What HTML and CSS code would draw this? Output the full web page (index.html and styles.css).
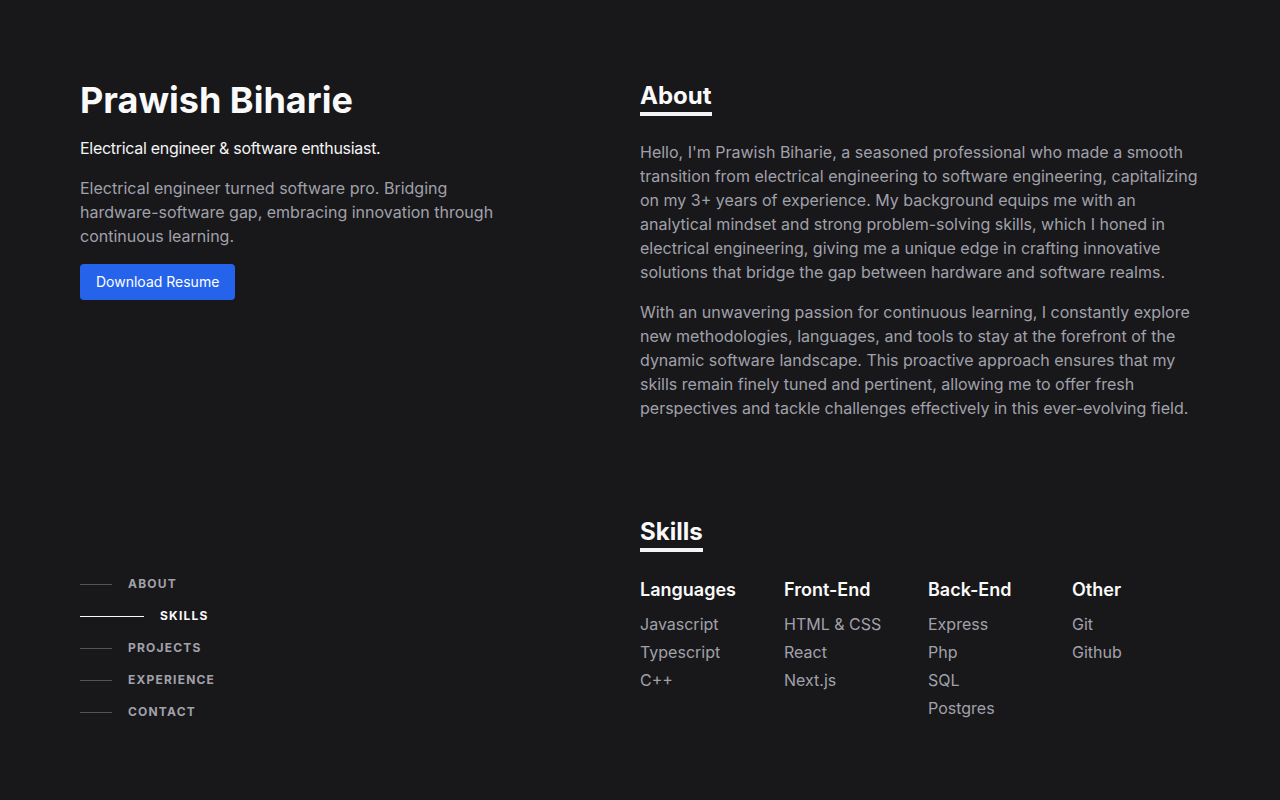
FILE: index.html
```html
<!DOCTYPE html>
<html lang="en">
<head>
<meta charset="utf-8">
<title>Prawish Biharie</title>
<link rel="stylesheet" href="styles.css">
</head>
<body>
<div class="page">
  <header class="side">
    <div class="intro">
      <h1 class="name">Prawish Biharie</h1>
      <h2 class="role">Electrical engineer &amp; software enthusiast.</h2>
      <p class="bio">Electrical engineer turned software pro. Bridging hardware-software gap, embracing innovation through continuous learning.</p>
      <a class="btn" href="#">Download Resume</a>
    </div>
    <nav class="nav">
      <a class="nav-item" href="#about"><span class="nav-line"></span><span class="nav-text">About</span></a>
      <a class="nav-item active" href="#skills"><span class="nav-line"></span><span class="nav-text">Skills</span></a>
      <a class="nav-item" href="#projects"><span class="nav-line"></span><span class="nav-text">Projects</span></a>
      <a class="nav-item" href="#experience"><span class="nav-line"></span><span class="nav-text">Experience</span></a>
      <a class="nav-item" href="#contact"><span class="nav-line"></span><span class="nav-text">Contact</span></a>
    </nav>
  </header>
  <main class="content">
    <section class="section" id="about">
      <h2 class="section-title">About</h2>
      <p class="text">Hello, I'm Prawish Biharie, a seasoned professional who made a smooth transition from electrical engineering to software engineering, capitalizing on my 3+ years of experience. My background equips me with an analytical mindset and strong problem-solving skills, which I honed in electrical engineering, giving me a unique edge in crafting innovative solutions that bridge the gap between hardware and software realms.</p>
      <p class="text">With an unwavering passion for continuous learning, I constantly explore new methodologies, languages, and tools to stay at the forefront of the dynamic software landscape. This proactive approach ensures that my skills remain finely tuned and pertinent, allowing me to offer fresh perspectives and tackle challenges effectively in this ever-evolving field.</p>
    </section>
    <section class="section skills" id="skills">
      <h2 class="section-title">Skills</h2>
      <div class="skill-grid">
        <div class="skill-col">
          <h3 class="skill-head">Languages</h3>
          <ul class="skill-list"><li>Javascript</li><li>Typescript</li><li>C++</li></ul>
        </div>
        <div class="skill-col">
          <h3 class="skill-head">Front-End</h3>
          <ul class="skill-list"><li>HTML &amp; CSS</li><li>React</li><li>Next.js</li></ul>
        </div>
        <div class="skill-col">
          <h3 class="skill-head">Back-End</h3>
          <ul class="skill-list"><li>Express</li><li>Php</li><li>SQL</li><li>Postgres</li></ul>
        </div>
        <div class="skill-col">
          <h3 class="skill-head">Other</h3>
          <ul class="skill-list"><li>Git</li><li>Github</li></ul>
        </div>
      </div>
    </section>
  </main>
</div>
</body>
</html>
```

FILE: styles.css
```css
* { box-sizing: border-box; }
html, body { margin: 0; padding: 0; }
body {
  background: #18181b;
  color: #a1a1aa;
  font-family: Inter, "Noto Sans", sans-serif;
  font-size: 16px;
  line-height: 24px;
  height: 800px;
  overflow: hidden;
}
.page {
  width: 1120px;
  margin: 0 auto;
  display: flex;
  gap: 80px;
}
.side {
  width: 480px;
  height: 800px;
  padding: 80px 0 72px;
  display: flex;
  flex-direction: column;
  justify-content: space-between;
}
.name {
  margin: 0;
  font-size: 36px;
  line-height: 40px;
  font-weight: 700;
  color: #fafafa;
}
.role {
  margin: 16px 0 0;
  font-size: 16px;
  line-height: 24px;
  font-weight: 400;
  letter-spacing: -0.3px;
  color: #f4f4f5;
}
.bio {
  margin: 16px 0 0;
  max-width: 448px;
}
.btn {
  display: inline-block;
  margin-top: 16px;
  background: #2563eb;
  color: #fff;
  font-size: 14px;
  line-height: 20px;
  padding: 8px 16px;
  border-radius: 4px;
  text-decoration: none;
}
.nav {
  display: flex;
  flex-direction: column;
}
.nav-item {
  display: flex;
  align-items: center;
  gap: 16px;
  padding: 8px 0;
  text-decoration: none;
}
.nav-line {
  width: 32px;
  height: 1px;
  background: #52525b;
}
.nav-text {
  font-size: 12px;
  line-height: 16px;
  font-weight: 700;
  letter-spacing: 0.1em;
  text-transform: uppercase;
  color: #a1a1aa;
}
.nav-item.active .nav-line {
  width: 64px;
  background: #fafafa;
}
.nav-item.active .nav-text { color: #fafafa; }
.content {
  width: 560px;
  padding-top: 80px;
}
.section-title {
  display: inline-block;
  margin: 0;
  font-size: 24px;
  line-height: 32px;
  font-weight: 700;
  color: #fafafa;
  border-bottom: 4px solid #f4f4f5;
}
.text { margin: 24px 0 0; }
.text + .text { margin-top: 16px; }
.skills { margin-top: 96px; }
.skill-grid {
  margin-top: 24px;
  display: grid;
  grid-template-columns: repeat(4, 1fr);
  gap: 16px;
}
.skill-head {
  margin: 0;
  font-size: 18px;
  line-height: 28px;
  font-weight: 600;
  color: #fafafa;
}
.skill-list {
  list-style: none;
  margin: 8px 0 0;
  padding: 0;
  display: flex;
  flex-direction: column;
  gap: 4px;
}
```
